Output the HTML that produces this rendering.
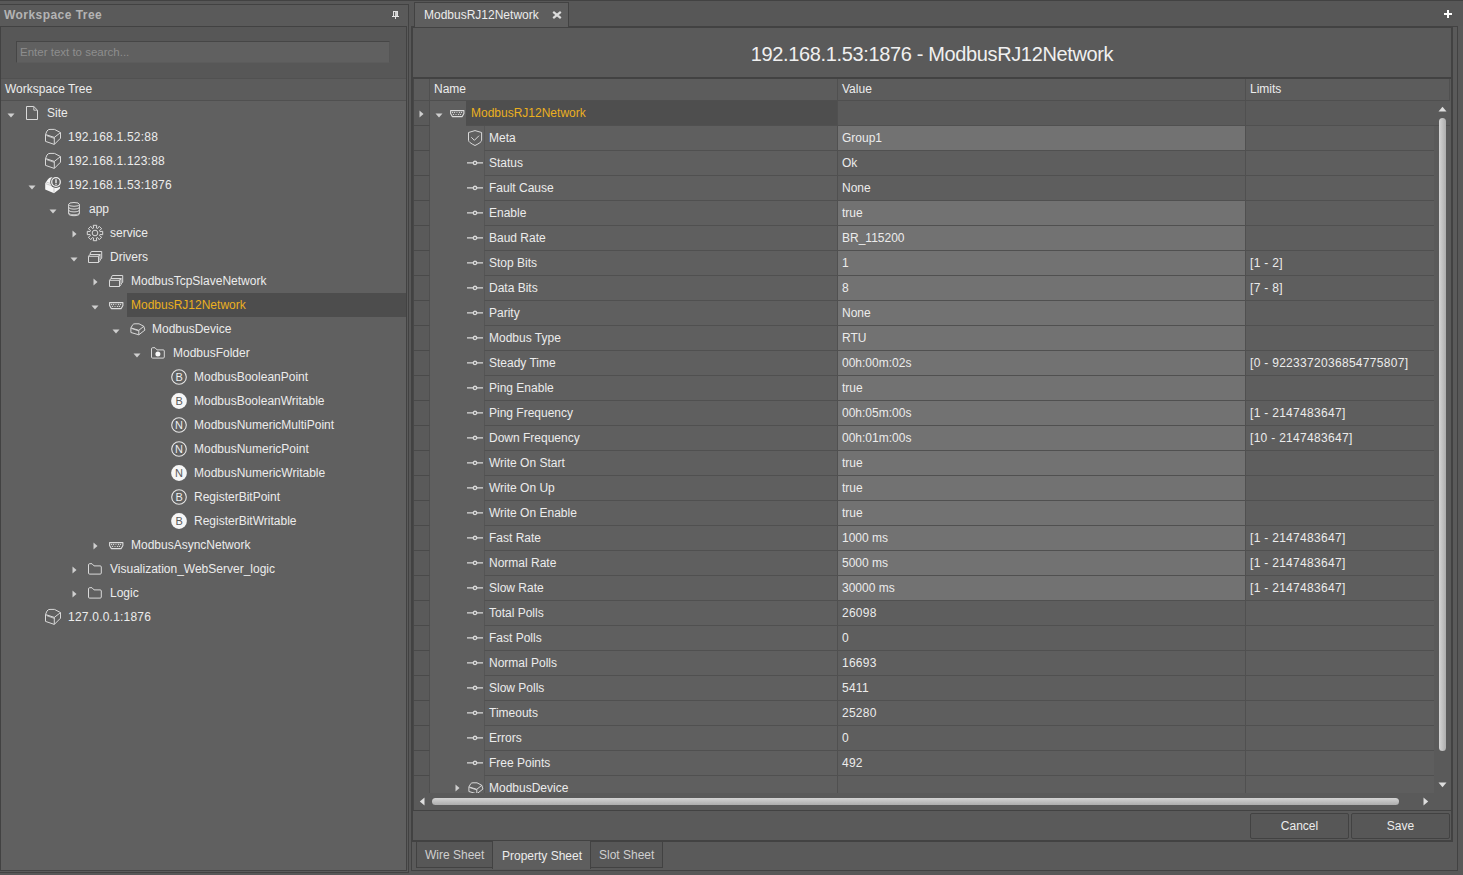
<!DOCTYPE html>
<html><head><meta charset="utf-8"><style>
html,body{margin:0;padding:0}
body{width:1463px;height:875px;overflow:hidden;background:#585858;position:relative;font-family:"Liberation Sans",sans-serif;font-size:12px;color:#ececec}
.a{position:absolute;box-sizing:content-box}
.t{position:absolute;white-space:nowrap;line-height:14px}
svg{overflow:visible}
</style></head><body>
<div class="a" style="left:0;top:0;width:1463px;height:1px;background:#424242"></div>
<div class="a" style="left:0;top:4px;width:408px;height:867px;border:1px solid #424242;border-left:none;background:#5a5a5a"></div>
<div class="t" style="left:4px;top:8px;font-weight:bold;color:#b4b4b4;letter-spacing:0.45px">Workspace Tree</div>
<svg class="a" style="left:391px;top:10px" width="10" height="10" viewBox="0 0 10 10" shape-rendering="crispEdges"><rect x="2" y="1" width="5" height="6" fill="#e2e2e2"/><rect x="3" y="2" width="1" height="4" fill="#606060"/><rect x="4" y="2" width="2" height="4" fill="#cfcfcf"/><rect x="1" y="6" width="7" height="1" fill="#e8e8e8"/><rect x="4" y="7" width="1" height="2" fill="#e0e0e0"/></svg>
<div class="a" style="left:0;top:26px;width:405px;height:843px;border:1px solid #424242;background:#606060"></div>
<div class="a" style="left:1px;top:27px;width:405px;height:51px;background:#575757"></div>
<div class="a" style="left:16px;top:41px;width:372px;height:20px;border:1px solid #464646;border-bottom-color:#5c5c5c;border-right-color:#555555;background:#606060"></div>
<div class="t" style="left:20px;top:45px;font-size:11.5px;color:#8e8e8e">Enter text to search...</div>
<div class="a" style="left:1px;top:78px;width:405px;height:1px;background:#515151"></div>
<div class="a" style="left:1px;top:79px;width:405px;height:21px;background:#5c5c5c;border-bottom:1px solid #505050"></div>
<div class="t" style="left:5px;top:82px;color:#ececec">Workspace Tree</div>
<svg class="a" style="left:7px;top:113px" width="8" height="5" viewBox="0 0 8 5"><path d="M0.5 0.5H7.5L4 4.5Z" fill="#cfcfcf"/></svg>
<svg class="a" style="left:26px;top:106px" width="13" height="15" viewBox="0 0 13 15" fill="none" stroke="#d9d9d9" stroke-width="1"><path d="M0.5 0.5H7.8L11.5 4.2V13.5H0.5Z"/><path d="M7.8 0.8V4.2H11.2" stroke-width="0.9"/></svg>
<div class="t" style="left:47px;top:106px;color:#ececec">Site</div>
<svg class="a" style="left:45px;top:129px" width="17" height="17" viewBox="0 0 17 17" fill="none" stroke="#d9d9d9" stroke-width="1"><path d="M0.5 5.5L9.3 8.4V15.4L0.5 12.4Z"/><path d="M9.3 8.4L15.5 3.6V9.2L9.3 15.4"/><path d="M0.5 5.5L2 2Q3 0.3 5 0.4H9.5L15.5 3.6"/><path d="M1.6 6.6L9.3 9.4" stroke-width="0.8"/></svg>
<div class="t" style="left:68px;top:130px;color:#ececec;letter-spacing:0.22px">192.168.1.52:88</div>
<svg class="a" style="left:45px;top:153px" width="17" height="17" viewBox="0 0 17 17" fill="none" stroke="#d9d9d9" stroke-width="1"><path d="M0.5 5.5L9.3 8.4V15.4L0.5 12.4Z"/><path d="M9.3 8.4L15.5 3.6V9.2L9.3 15.4"/><path d="M0.5 5.5L2 2Q3 0.3 5 0.4H9.5L15.5 3.6"/><path d="M1.6 6.6L9.3 9.4" stroke-width="0.8"/></svg>
<div class="t" style="left:68px;top:154px;color:#ececec;letter-spacing:0.22px">192.168.1.123:88</div>
<svg class="a" style="left:28px;top:185px" width="8" height="5" viewBox="0 0 8 5"><path d="M0.5 0.5H7.5L4 4.5Z" fill="#cfcfcf"/></svg>
<svg class="a" style="left:45px;top:177px" width="17" height="17" viewBox="0 0 17 17"><path d="M0.2 6.2L2.8 2.6Q4 0.4 6.2 0.3H9L15.2 8.5L14.8 11.8L9 16.2L0.2 12.6Z" fill="#f6f6f6"/><path d="M0.6 6.6L9 9.6V15.8M1.5 5.2L5.5 6.4" stroke="#b8b8b8" stroke-width="0.7" fill="none"/><circle cx="11" cy="5" r="5.9" fill="#606060"/><circle cx="11" cy="5" r="4.3" fill="none" stroke="#ececec" stroke-width="1.3"/><path d="M11 2.3V6.2" stroke="#e6e6e6" stroke-width="1.5"/><path d="M11 6.9V7.9" stroke="#e6e6e6" stroke-width="1.3"/></svg>
<div class="t" style="left:68px;top:178px;color:#ececec;letter-spacing:0.22px">192.168.1.53:1876</div>
<svg class="a" style="left:49px;top:209px" width="8" height="5" viewBox="0 0 8 5"><path d="M0.5 0.5H7.5L4 4.5Z" fill="#cfcfcf"/></svg>
<svg class="a" style="left:68px;top:202px" width="13" height="15" viewBox="0 0 13 15" fill="none" stroke="#d9d9d9" stroke-width="1"><ellipse cx="6" cy="2.4" rx="5.4" ry="1.9"/><path d="M0.6 2.4V11.8C0.6 12.9 3 13.7 6 13.7S11.4 12.9 11.4 11.8V2.4"/><path d="M0.6 5.2C0.6 6.3 3 7.1 6 7.1S11.4 6.3 11.4 5.2"/><path d="M0.6 8C0.6 9.1 3 9.9 6 9.9S11.4 9.1 11.4 8"/><path d="M0.6 10.8C0.6 11.9 3 12.7 6 12.7S11.4 11.9 11.4 10.8" stroke-width="0.8"/></svg>
<div class="t" style="left:89px;top:202px;color:#ececec">app</div>
<svg class="a" style="left:72px;top:229.5px" width="5" height="8" viewBox="0 0 5 8"><path d="M0.5 0.5V7.5L4.5 4Z" fill="#cfcfcf"/></svg>
<svg class="a" style="left:87px;top:225px" width="17" height="17" viewBox="0 0 17 17" fill="none" stroke="#d9d9d9" stroke-width="1"><path d="M6.65 3.00 L6.25 0.30 L9.75 0.30 L9.35 3.00 L10.58 3.51 L12.21 1.32 L14.68 3.79 L12.49 5.42 L13.00 6.65 L15.70 6.25 L15.70 9.75 L13.00 9.35 L12.49 10.58 L14.68 12.21 L12.21 14.68 L10.58 12.49 L9.35 13.00 L9.75 15.70 L6.25 15.70 L6.65 13.00 L5.42 12.49 L3.79 14.68 L1.32 12.21 L3.51 10.58 L3.00 9.35 L0.30 9.75 L0.30 6.25 L3.00 6.65 L3.51 5.42 L1.32 3.79 L3.79 1.32 L5.42 3.51Z" stroke-linejoin="miter"/><circle cx="8" cy="8" r="2.8"/></svg>
<div class="t" style="left:110px;top:226px;color:#ececec">service</div>
<svg class="a" style="left:70px;top:257px" width="8" height="5" viewBox="0 0 8 5"><path d="M0.5 0.5H7.5L4 4.5Z" fill="#cfcfcf"/></svg>
<svg class="a" style="left:88px;top:251px" width="15" height="13" viewBox="0 0 15 13" fill="none" stroke="#d9d9d9" stroke-width="1"><path d="M3.3 0.5H13.7V7.3L12.2 8.8"/><path d="M3.3 0.5L1.8 3.5"/><path d="M0.5 5.3L2 3.5H12L10.5 5.3"/><path d="M0.5 5.3H10.5V11.5H0.5Z"/><path d="M10.5 5.3L12 3.5V9.6L10.5 11.5"/></svg>
<div class="t" style="left:110px;top:250px;color:#ececec">Drivers</div>
<svg class="a" style="left:93px;top:277.5px" width="5" height="8" viewBox="0 0 5 8"><path d="M0.5 0.5V7.5L4.5 4Z" fill="#cfcfcf"/></svg>
<svg class="a" style="left:109px;top:275px" width="15" height="13" viewBox="0 0 15 13" fill="none" stroke="#d9d9d9" stroke-width="1"><path d="M3.3 0.5H13.7V7.3L12.2 8.8"/><path d="M3.3 0.5L1.8 3.5"/><path d="M0.5 5.3L2 3.5H12L10.5 5.3"/><path d="M0.5 5.3H10.5V11.5H0.5Z"/><path d="M10.5 5.3L12 3.5V9.6L10.5 11.5"/></svg>
<div class="t" style="left:131px;top:274px;color:#ececec">ModbusTcpSlaveNetwork</div>
<div class="a" style="left:127px;top:293px;width:279px;height:24px;background:#4d4d4d"></div>
<svg class="a" style="left:91px;top:305px" width="8" height="5" viewBox="0 0 8 5"><path d="M0.5 0.5H7.5L4 4.5Z" fill="#cfcfcf"/></svg>
<svg class="a" style="left:109px;top:302px" width="15" height="8" viewBox="0 0 15 8"><path d="M0.6 0.6H13.9V3.4L12.2 6.6H2.3L0.6 3.4Z" fill="none" stroke="#dcdcdc" stroke-width="1.1" stroke-linejoin="round"/><g fill="#d0d0d0"><circle cx="2.5" cy="2.5" r="0.7"/><circle cx="4.5" cy="2.5" r="0.7"/><circle cx="9.5" cy="2.5" r="0.7"/><circle cx="11.5" cy="2.5" r="0.7"/><circle cx="3.5" cy="4.4" r="0.7"/><circle cx="8.5" cy="4.4" r="0.7"/><circle cx="10.5" cy="4.4" r="0.7"/><rect x="5.8" y="2.1" width="2" height="0.8" fill="#a8a8a8"/><rect x="5" y="4" width="2" height="0.8" fill="#a8a8a8"/></g></svg>
<div class="t" style="left:131px;top:298px;color:#ebb020">ModbusRJ12Network</div>
<svg class="a" style="left:112px;top:329px" width="8" height="5" viewBox="0 0 8 5"><path d="M0.5 0.5H7.5L4 4.5Z" fill="#cfcfcf"/></svg>
<svg class="a" style="left:129.5px;top:322.5px" width="16" height="14" viewBox="0 0 16 14" fill="none" stroke="#d9d9d9" stroke-width="1"><path d="M0.9 4.9L8.8 7.3V11.8L0.9 9.5Z"/><path d="M8.8 7.3L13.8 3.3L14.9 7.1L8.8 11.8"/><path d="M0.9 4.9L2.8 1.6Q3.5 0.8 5 0.8H9L13.8 3.3"/><path d="M1.8 5.6L8.6 7.9" stroke-width="0.8"/></svg>
<div class="t" style="left:152px;top:322px;color:#ececec">ModbusDevice</div>
<svg class="a" style="left:133px;top:353px" width="8" height="5" viewBox="0 0 8 5"><path d="M0.5 0.5H7.5L4 4.5Z" fill="#cfcfcf"/></svg>
<svg class="a" style="left:151px;top:347px" width="15" height="13" viewBox="0 0 15 13" fill="none" stroke="#d9d9d9" stroke-width="1"><path d="M0.5 10V1.9Q0.5 0.7 1.7 0.7H4L6 2.9H12.2Q13.3 2.9 13.3 4V10Q13.3 11.1 12.2 11.1H1.6Q0.5 11.1 0.5 10Z"/><circle cx="6.9" cy="7.1" r="2.5" fill="#f8f8f8" stroke="none"/></svg>
<div class="t" style="left:173px;top:346px;color:#ececec">ModbusFolder</div>
<svg class="a" style="left:171px;top:369px" width="17" height="17" viewBox="0 0 17 17"><circle cx="8" cy="8" r="7.3" fill="none" stroke="#e6e6e6" stroke-width="1.1"/><text x="8.1" y="12" text-anchor="middle" font-family="Liberation Sans" font-size="11" fill="#ededed">B</text></svg>
<div class="t" style="left:194px;top:370px;color:#ececec">ModbusBooleanPoint</div>
<svg class="a" style="left:171px;top:393px" width="17" height="17" viewBox="0 0 17 17"><circle cx="8" cy="8" r="7.9" fill="#f6f6f6"/><text x="8.1" y="12" text-anchor="middle" font-family="Liberation Sans" font-size="11" fill="#5a5a5a">B</text></svg>
<div class="t" style="left:194px;top:394px;color:#ececec">ModbusBooleanWritable</div>
<svg class="a" style="left:171px;top:417px" width="17" height="17" viewBox="0 0 17 17"><circle cx="8" cy="8" r="7.3" fill="none" stroke="#e6e6e6" stroke-width="1.1"/><text x="8.1" y="12" text-anchor="middle" font-family="Liberation Sans" font-size="11" fill="#ededed">N</text></svg>
<div class="t" style="left:194px;top:418px;color:#ececec">ModbusNumericMultiPoint</div>
<svg class="a" style="left:171px;top:441px" width="17" height="17" viewBox="0 0 17 17"><circle cx="8" cy="8" r="7.3" fill="none" stroke="#e6e6e6" stroke-width="1.1"/><text x="8.1" y="12" text-anchor="middle" font-family="Liberation Sans" font-size="11" fill="#ededed">N</text></svg>
<div class="t" style="left:194px;top:442px;color:#ececec">ModbusNumericPoint</div>
<svg class="a" style="left:171px;top:465px" width="17" height="17" viewBox="0 0 17 17"><circle cx="8" cy="8" r="7.9" fill="#f6f6f6"/><text x="8.1" y="12" text-anchor="middle" font-family="Liberation Sans" font-size="11" fill="#5a5a5a">N</text></svg>
<div class="t" style="left:194px;top:466px;color:#ececec">ModbusNumericWritable</div>
<svg class="a" style="left:171px;top:489px" width="17" height="17" viewBox="0 0 17 17"><circle cx="8" cy="8" r="7.3" fill="none" stroke="#e6e6e6" stroke-width="1.1"/><text x="8.1" y="12" text-anchor="middle" font-family="Liberation Sans" font-size="11" fill="#ededed">B</text></svg>
<div class="t" style="left:194px;top:490px;color:#ececec">RegisterBitPoint</div>
<svg class="a" style="left:171px;top:513px" width="17" height="17" viewBox="0 0 17 17"><circle cx="8" cy="8" r="7.9" fill="#f6f6f6"/><text x="8.1" y="12" text-anchor="middle" font-family="Liberation Sans" font-size="11" fill="#5a5a5a">B</text></svg>
<div class="t" style="left:194px;top:514px;color:#ececec">RegisterBitWritable</div>
<svg class="a" style="left:93px;top:541.5px" width="5" height="8" viewBox="0 0 5 8"><path d="M0.5 0.5V7.5L4.5 4Z" fill="#cfcfcf"/></svg>
<svg class="a" style="left:109px;top:542px" width="15" height="8" viewBox="0 0 15 8"><path d="M0.6 0.6H13.9V3.4L12.2 6.6H2.3L0.6 3.4Z" fill="none" stroke="#dcdcdc" stroke-width="1.1" stroke-linejoin="round"/><g fill="#d0d0d0"><circle cx="2.5" cy="2.5" r="0.7"/><circle cx="4.5" cy="2.5" r="0.7"/><circle cx="9.5" cy="2.5" r="0.7"/><circle cx="11.5" cy="2.5" r="0.7"/><circle cx="3.5" cy="4.4" r="0.7"/><circle cx="8.5" cy="4.4" r="0.7"/><circle cx="10.5" cy="4.4" r="0.7"/><rect x="5.8" y="2.1" width="2" height="0.8" fill="#a8a8a8"/><rect x="5" y="4" width="2" height="0.8" fill="#a8a8a8"/></g></svg>
<div class="t" style="left:131px;top:538px;color:#ececec">ModbusAsyncNetwork</div>
<svg class="a" style="left:72px;top:565.5px" width="5" height="8" viewBox="0 0 5 8"><path d="M0.5 0.5V7.5L4.5 4Z" fill="#cfcfcf"/></svg>
<svg class="a" style="left:88px;top:563px" width="15" height="13" viewBox="0 0 15 13" fill="none" stroke="#d9d9d9" stroke-width="1"><path d="M0.5 10V1.9Q0.5 0.7 1.7 0.7H4L6 2.9H12.2Q13.3 2.9 13.3 4V10Q13.3 11.1 12.2 11.1H1.6Q0.5 11.1 0.5 10Z"/></svg>
<div class="t" style="left:110px;top:562px;color:#ececec">Visualization_WebServer_logic</div>
<svg class="a" style="left:72px;top:589.5px" width="5" height="8" viewBox="0 0 5 8"><path d="M0.5 0.5V7.5L4.5 4Z" fill="#cfcfcf"/></svg>
<svg class="a" style="left:88px;top:587px" width="15" height="13" viewBox="0 0 15 13" fill="none" stroke="#d9d9d9" stroke-width="1"><path d="M0.5 10V1.9Q0.5 0.7 1.7 0.7H4L6 2.9H12.2Q13.3 2.9 13.3 4V10Q13.3 11.1 12.2 11.1H1.6Q0.5 11.1 0.5 10Z"/></svg>
<div class="t" style="left:110px;top:586px;color:#ececec">Logic</div>
<svg class="a" style="left:45px;top:609px" width="17" height="17" viewBox="0 0 17 17" fill="none" stroke="#d9d9d9" stroke-width="1"><path d="M0.5 5.5L9.3 8.4V15.4L0.5 12.4Z"/><path d="M9.3 8.4L15.5 3.6V9.2L9.3 15.4"/><path d="M0.5 5.5L2 2Q3 0.3 5 0.4H9.5L15.5 3.6"/><path d="M1.6 6.6L9.3 9.4" stroke-width="0.8"/></svg>
<div class="t" style="left:68px;top:610px;color:#ececec;letter-spacing:0.22px">127.0.0.1:1876</div>
<div class="a" style="left:409px;top:1px;width:1054px;height:25px;background:#575757"></div>
<svg class="a" style="left:1444px;top:10px" width="8" height="8" viewBox="0 0 8 8"><path d="M0 4H8M4 0V8" stroke="#ffffff" stroke-width="2"/></svg>
<div class="a" style="left:411px;top:26px;width:1045px;height:843px;border:1px solid #424242;background:#5a5a5a"></div>
<div class="a" style="left:412px;top:27px;width:1038px;height:812px;border:1px solid #424242;border-right-width:2px;border-bottom-width:2px;background:#5a5a5a"></div>
<div class="a" style="left:414px;top:2px;width:153px;height:24px;border:1px solid #424242;border-bottom:none;background:#5e5e5e"></div>
<div class="t" style="left:424px;top:8px;color:#ececec">ModbusRJ12Network</div>
<svg class="a" style="left:552px;top:11px" width="10" height="8" viewBox="0 0 10 8"><path d="M1.2 0.8L8.8 7.2M8.8 0.8L1.2 7.2" stroke="#dcdcdc" stroke-width="2.2"/></svg>
<div class="t" style="left:413px;top:43px;width:1038px;text-align:center;font-size:20px;line-height:23px;color:#f0f0f0;letter-spacing:-0.36px">192.168.1.53:1876 - ModbusRJ12Network</div>
<div class="a" style="left:413px;top:77px;width:1038px;height:2px;background:#424242"></div>
<div class="a" style="left:413px;top:79px;width:1px;height:731px;background:#474747"></div>
<div class="a" style="left:414px;top:79px;width:1036px;height:21px;background:#5c5c5c"></div>
<div class="a" style="left:414px;top:100px;width:1036px;height:1px;background:#4f4f4f"></div>
<div class="a" style="left:429px;top:79px;width:1px;height:21px;background:#505050"></div>
<div class="a" style="left:837px;top:79px;width:1px;height:21px;background:#505050"></div>
<div class="a" style="left:1245px;top:79px;width:1px;height:21px;background:#505050"></div>
<div class="a" style="left:1449px;top:79px;width:1px;height:21px;background:#505050"></div>
<div class="t" style="left:434px;top:82px;color:#ececec">Name</div>
<div class="t" style="left:842px;top:82px;color:#ececec">Value</div>
<div class="t" style="left:1250px;top:82px;color:#ececec">Limits</div>
<div class="a" style="left:414px;top:101px;width:1036px;height:692px;overflow:hidden">
<div class="a" style="left:0;top:0px;width:15px;height:24px;background:#5a5a5a;border-bottom:1px solid #4a4a4a;border-right:1px solid #4f4f4f"></div>
<div class="a" style="left:16px;top:0px;width:54px;height:25px;background:#5f5f5f"></div>
<div class="a" style="left:16px;top:0px;width:36px;height:24px;background:#5f5f5f"></div>
<div class="a" style="left:52px;top:0px;width:371px;height:24px;background:#4e4e4e;border-bottom:1px solid #505050"></div>
<div class="a" style="left:423px;top:0px;width:408px;height:24px;background:#5a5a5a;border-bottom:1px solid #505050;border-left:1px solid #505050"></div>
<div class="a" style="left:831px;top:0px;width:205px;height:24px;background:#5a5a5a;border-bottom:1px solid #505050;border-left:1px solid #505050"></div>
<svg class="a" style="left:5px;top:8.5px" width="5" height="8" viewBox="0 0 5 8"><path d="M0.5 0.5V7.5L4.5 4Z" fill="#cfcfcf"/></svg>
<svg class="a" style="left:20.5px;top:12px" width="8" height="5" viewBox="0 0 8 5"><path d="M0.5 0.5H7.5L4 4.5Z" fill="#cfcfcf"/></svg>
<svg class="a" style="left:35.5px;top:8.5px" width="15" height="8" viewBox="0 0 15 8"><path d="M0.6 0.6H13.9V3.4L12.2 6.6H2.3L0.6 3.4Z" fill="none" stroke="#dcdcdc" stroke-width="1.1" stroke-linejoin="round"/><g fill="#d0d0d0"><circle cx="2.5" cy="2.5" r="0.7"/><circle cx="4.5" cy="2.5" r="0.7"/><circle cx="9.5" cy="2.5" r="0.7"/><circle cx="11.5" cy="2.5" r="0.7"/><circle cx="3.5" cy="4.4" r="0.7"/><circle cx="8.5" cy="4.4" r="0.7"/><circle cx="10.5" cy="4.4" r="0.7"/><rect x="5.8" y="2.1" width="2" height="0.8" fill="#a8a8a8"/><rect x="5" y="4" width="2" height="0.8" fill="#a8a8a8"/></g></svg>
<div class="t" style="left:57px;top:5px;color:#ebb020">ModbusRJ12Network</div>
<div class="a" style="left:0;top:25px;width:15px;height:24px;background:#5a5a5a;border-bottom:1px solid #4a4a4a;border-right:1px solid #4f4f4f"></div>
<div class="a" style="left:16px;top:25px;width:54px;height:25px;background:#5f5f5f"></div>
<div class="a" style="left:70px;top:25px;width:353px;height:24px;background:#5f5f5f;border-left:1px solid #555555;border-bottom:1px solid #505050"></div>
<div class="a" style="left:423px;top:25px;width:408px;height:24px;background:#727272;border-left:1px solid #505050;border-bottom:1px solid #505050"></div>
<div class="a" style="left:831px;top:25px;width:188px;height:24px;background:#5e5e5e;border-left:1px solid #505050;border-bottom:1px solid #505050"></div>
<svg class="a" style="left:54px;top:29px" width="15" height="16" viewBox="0 0 15 16" fill="none" stroke="#d9d9d9" stroke-width="1"><path d="M7 0.6L13.6 2.5V10.3Q13.6 12.4 7 15.5Q0.5 12.4 0.5 10.3V2.5Z"/><path d="M3.3 7.3L6.4 10.3L11 5.7"/></svg>
<div class="t" style="left:75px;top:30px;color:#ececec">Meta</div>
<div class="t" style="left:428px;top:30px;color:#ececec">Group1</div>
<div class="a" style="left:0;top:50px;width:15px;height:24px;background:#5a5a5a;border-bottom:1px solid #4a4a4a;border-right:1px solid #4f4f4f"></div>
<div class="a" style="left:16px;top:50px;width:54px;height:25px;background:#5f5f5f"></div>
<div class="a" style="left:70px;top:50px;width:353px;height:24px;background:#5f5f5f;border-left:1px solid #555555;border-bottom:1px solid #505050"></div>
<div class="a" style="left:423px;top:50px;width:408px;height:24px;background:#5e5e5e;border-left:1px solid #505050;border-bottom:1px solid #505050"></div>
<div class="a" style="left:831px;top:50px;width:188px;height:24px;background:#5e5e5e;border-left:1px solid #505050;border-bottom:1px solid #505050"></div>
<svg class="a" style="left:53px;top:58px" width="16" height="8" viewBox="0 0 16 8" fill="none" stroke="#d9d9d9" stroke-width="1"><path d="M0 3.9H6.3M9.7 3.9H16" stroke-width="1.2"/><circle cx="8" cy="3.9" r="1.65" stroke-width="1.3"/></svg>
<div class="t" style="left:75px;top:55px;color:#ececec">Status</div>
<div class="t" style="left:428px;top:55px;color:#ececec">Ok</div>
<div class="a" style="left:0;top:75px;width:15px;height:24px;background:#5a5a5a;border-bottom:1px solid #4a4a4a;border-right:1px solid #4f4f4f"></div>
<div class="a" style="left:16px;top:75px;width:54px;height:25px;background:#5f5f5f"></div>
<div class="a" style="left:70px;top:75px;width:353px;height:24px;background:#5f5f5f;border-left:1px solid #555555;border-bottom:1px solid #505050"></div>
<div class="a" style="left:423px;top:75px;width:408px;height:24px;background:#5e5e5e;border-left:1px solid #505050;border-bottom:1px solid #505050"></div>
<div class="a" style="left:831px;top:75px;width:188px;height:24px;background:#5e5e5e;border-left:1px solid #505050;border-bottom:1px solid #505050"></div>
<svg class="a" style="left:53px;top:83px" width="16" height="8" viewBox="0 0 16 8" fill="none" stroke="#d9d9d9" stroke-width="1"><path d="M0 3.9H6.3M9.7 3.9H16" stroke-width="1.2"/><circle cx="8" cy="3.9" r="1.65" stroke-width="1.3"/></svg>
<div class="t" style="left:75px;top:80px;color:#ececec">Fault Cause</div>
<div class="t" style="left:428px;top:80px;color:#ececec">None</div>
<div class="a" style="left:0;top:100px;width:15px;height:24px;background:#5a5a5a;border-bottom:1px solid #4a4a4a;border-right:1px solid #4f4f4f"></div>
<div class="a" style="left:16px;top:100px;width:54px;height:25px;background:#5f5f5f"></div>
<div class="a" style="left:70px;top:100px;width:353px;height:24px;background:#5f5f5f;border-left:1px solid #555555;border-bottom:1px solid #505050"></div>
<div class="a" style="left:423px;top:100px;width:408px;height:24px;background:#727272;border-left:1px solid #505050;border-bottom:1px solid #505050"></div>
<div class="a" style="left:831px;top:100px;width:188px;height:24px;background:#5e5e5e;border-left:1px solid #505050;border-bottom:1px solid #505050"></div>
<svg class="a" style="left:53px;top:108px" width="16" height="8" viewBox="0 0 16 8" fill="none" stroke="#d9d9d9" stroke-width="1"><path d="M0 3.9H6.3M9.7 3.9H16" stroke-width="1.2"/><circle cx="8" cy="3.9" r="1.65" stroke-width="1.3"/></svg>
<div class="t" style="left:75px;top:105px;color:#ececec">Enable</div>
<div class="t" style="left:428px;top:105px;color:#ececec">true</div>
<div class="a" style="left:0;top:125px;width:15px;height:24px;background:#5a5a5a;border-bottom:1px solid #4a4a4a;border-right:1px solid #4f4f4f"></div>
<div class="a" style="left:16px;top:125px;width:54px;height:25px;background:#5f5f5f"></div>
<div class="a" style="left:70px;top:125px;width:353px;height:24px;background:#5f5f5f;border-left:1px solid #555555;border-bottom:1px solid #505050"></div>
<div class="a" style="left:423px;top:125px;width:408px;height:24px;background:#727272;border-left:1px solid #505050;border-bottom:1px solid #505050"></div>
<div class="a" style="left:831px;top:125px;width:188px;height:24px;background:#5e5e5e;border-left:1px solid #505050;border-bottom:1px solid #505050"></div>
<svg class="a" style="left:53px;top:133px" width="16" height="8" viewBox="0 0 16 8" fill="none" stroke="#d9d9d9" stroke-width="1"><path d="M0 3.9H6.3M9.7 3.9H16" stroke-width="1.2"/><circle cx="8" cy="3.9" r="1.65" stroke-width="1.3"/></svg>
<div class="t" style="left:75px;top:130px;color:#ececec">Baud Rate</div>
<div class="t" style="left:428px;top:130px;color:#ececec">BR_115200</div>
<div class="a" style="left:0;top:150px;width:15px;height:24px;background:#5a5a5a;border-bottom:1px solid #4a4a4a;border-right:1px solid #4f4f4f"></div>
<div class="a" style="left:16px;top:150px;width:54px;height:25px;background:#5f5f5f"></div>
<div class="a" style="left:70px;top:150px;width:353px;height:24px;background:#5f5f5f;border-left:1px solid #555555;border-bottom:1px solid #505050"></div>
<div class="a" style="left:423px;top:150px;width:408px;height:24px;background:#727272;border-left:1px solid #505050;border-bottom:1px solid #505050"></div>
<div class="a" style="left:831px;top:150px;width:188px;height:24px;background:#5e5e5e;border-left:1px solid #505050;border-bottom:1px solid #505050"></div>
<svg class="a" style="left:53px;top:158px" width="16" height="8" viewBox="0 0 16 8" fill="none" stroke="#d9d9d9" stroke-width="1"><path d="M0 3.9H6.3M9.7 3.9H16" stroke-width="1.2"/><circle cx="8" cy="3.9" r="1.65" stroke-width="1.3"/></svg>
<div class="t" style="left:75px;top:155px;color:#ececec">Stop Bits</div>
<div class="t" style="left:428px;top:155px;color:#ececec;letter-spacing:0.25px">1</div>
<div class="t" style="left:836px;top:155px;color:#ececec;letter-spacing:0.3px">[1 - 2]</div>
<div class="a" style="left:0;top:175px;width:15px;height:24px;background:#5a5a5a;border-bottom:1px solid #4a4a4a;border-right:1px solid #4f4f4f"></div>
<div class="a" style="left:16px;top:175px;width:54px;height:25px;background:#5f5f5f"></div>
<div class="a" style="left:70px;top:175px;width:353px;height:24px;background:#5f5f5f;border-left:1px solid #555555;border-bottom:1px solid #505050"></div>
<div class="a" style="left:423px;top:175px;width:408px;height:24px;background:#727272;border-left:1px solid #505050;border-bottom:1px solid #505050"></div>
<div class="a" style="left:831px;top:175px;width:188px;height:24px;background:#5e5e5e;border-left:1px solid #505050;border-bottom:1px solid #505050"></div>
<svg class="a" style="left:53px;top:183px" width="16" height="8" viewBox="0 0 16 8" fill="none" stroke="#d9d9d9" stroke-width="1"><path d="M0 3.9H6.3M9.7 3.9H16" stroke-width="1.2"/><circle cx="8" cy="3.9" r="1.65" stroke-width="1.3"/></svg>
<div class="t" style="left:75px;top:180px;color:#ececec">Data Bits</div>
<div class="t" style="left:428px;top:180px;color:#ececec;letter-spacing:0.25px">8</div>
<div class="t" style="left:836px;top:180px;color:#ececec;letter-spacing:0.3px">[7 - 8]</div>
<div class="a" style="left:0;top:200px;width:15px;height:24px;background:#5a5a5a;border-bottom:1px solid #4a4a4a;border-right:1px solid #4f4f4f"></div>
<div class="a" style="left:16px;top:200px;width:54px;height:25px;background:#5f5f5f"></div>
<div class="a" style="left:70px;top:200px;width:353px;height:24px;background:#5f5f5f;border-left:1px solid #555555;border-bottom:1px solid #505050"></div>
<div class="a" style="left:423px;top:200px;width:408px;height:24px;background:#727272;border-left:1px solid #505050;border-bottom:1px solid #505050"></div>
<div class="a" style="left:831px;top:200px;width:188px;height:24px;background:#5e5e5e;border-left:1px solid #505050;border-bottom:1px solid #505050"></div>
<svg class="a" style="left:53px;top:208px" width="16" height="8" viewBox="0 0 16 8" fill="none" stroke="#d9d9d9" stroke-width="1"><path d="M0 3.9H6.3M9.7 3.9H16" stroke-width="1.2"/><circle cx="8" cy="3.9" r="1.65" stroke-width="1.3"/></svg>
<div class="t" style="left:75px;top:205px;color:#ececec">Parity</div>
<div class="t" style="left:428px;top:205px;color:#ececec">None</div>
<div class="a" style="left:0;top:225px;width:15px;height:24px;background:#5a5a5a;border-bottom:1px solid #4a4a4a;border-right:1px solid #4f4f4f"></div>
<div class="a" style="left:16px;top:225px;width:54px;height:25px;background:#5f5f5f"></div>
<div class="a" style="left:70px;top:225px;width:353px;height:24px;background:#5f5f5f;border-left:1px solid #555555;border-bottom:1px solid #505050"></div>
<div class="a" style="left:423px;top:225px;width:408px;height:24px;background:#727272;border-left:1px solid #505050;border-bottom:1px solid #505050"></div>
<div class="a" style="left:831px;top:225px;width:188px;height:24px;background:#5e5e5e;border-left:1px solid #505050;border-bottom:1px solid #505050"></div>
<svg class="a" style="left:53px;top:233px" width="16" height="8" viewBox="0 0 16 8" fill="none" stroke="#d9d9d9" stroke-width="1"><path d="M0 3.9H6.3M9.7 3.9H16" stroke-width="1.2"/><circle cx="8" cy="3.9" r="1.65" stroke-width="1.3"/></svg>
<div class="t" style="left:75px;top:230px;color:#ececec">Modbus Type</div>
<div class="t" style="left:428px;top:230px;color:#ececec">RTU</div>
<div class="a" style="left:0;top:250px;width:15px;height:24px;background:#5a5a5a;border-bottom:1px solid #4a4a4a;border-right:1px solid #4f4f4f"></div>
<div class="a" style="left:16px;top:250px;width:54px;height:25px;background:#5f5f5f"></div>
<div class="a" style="left:70px;top:250px;width:353px;height:24px;background:#5f5f5f;border-left:1px solid #555555;border-bottom:1px solid #505050"></div>
<div class="a" style="left:423px;top:250px;width:408px;height:24px;background:#727272;border-left:1px solid #505050;border-bottom:1px solid #505050"></div>
<div class="a" style="left:831px;top:250px;width:188px;height:24px;background:#5e5e5e;border-left:1px solid #505050;border-bottom:1px solid #505050"></div>
<svg class="a" style="left:53px;top:258px" width="16" height="8" viewBox="0 0 16 8" fill="none" stroke="#d9d9d9" stroke-width="1"><path d="M0 3.9H6.3M9.7 3.9H16" stroke-width="1.2"/><circle cx="8" cy="3.9" r="1.65" stroke-width="1.3"/></svg>
<div class="t" style="left:75px;top:255px;color:#ececec">Steady Time</div>
<div class="t" style="left:428px;top:255px;color:#ececec">00h:00m:02s</div>
<div class="t" style="left:836px;top:255px;color:#ececec;letter-spacing:0.3px">[0 - 9223372036854775807]</div>
<div class="a" style="left:0;top:275px;width:15px;height:24px;background:#5a5a5a;border-bottom:1px solid #4a4a4a;border-right:1px solid #4f4f4f"></div>
<div class="a" style="left:16px;top:275px;width:54px;height:25px;background:#5f5f5f"></div>
<div class="a" style="left:70px;top:275px;width:353px;height:24px;background:#5f5f5f;border-left:1px solid #555555;border-bottom:1px solid #505050"></div>
<div class="a" style="left:423px;top:275px;width:408px;height:24px;background:#727272;border-left:1px solid #505050;border-bottom:1px solid #505050"></div>
<div class="a" style="left:831px;top:275px;width:188px;height:24px;background:#5e5e5e;border-left:1px solid #505050;border-bottom:1px solid #505050"></div>
<svg class="a" style="left:53px;top:283px" width="16" height="8" viewBox="0 0 16 8" fill="none" stroke="#d9d9d9" stroke-width="1"><path d="M0 3.9H6.3M9.7 3.9H16" stroke-width="1.2"/><circle cx="8" cy="3.9" r="1.65" stroke-width="1.3"/></svg>
<div class="t" style="left:75px;top:280px;color:#ececec">Ping Enable</div>
<div class="t" style="left:428px;top:280px;color:#ececec">true</div>
<div class="a" style="left:0;top:300px;width:15px;height:24px;background:#5a5a5a;border-bottom:1px solid #4a4a4a;border-right:1px solid #4f4f4f"></div>
<div class="a" style="left:16px;top:300px;width:54px;height:25px;background:#5f5f5f"></div>
<div class="a" style="left:70px;top:300px;width:353px;height:24px;background:#5f5f5f;border-left:1px solid #555555;border-bottom:1px solid #505050"></div>
<div class="a" style="left:423px;top:300px;width:408px;height:24px;background:#727272;border-left:1px solid #505050;border-bottom:1px solid #505050"></div>
<div class="a" style="left:831px;top:300px;width:188px;height:24px;background:#5e5e5e;border-left:1px solid #505050;border-bottom:1px solid #505050"></div>
<svg class="a" style="left:53px;top:308px" width="16" height="8" viewBox="0 0 16 8" fill="none" stroke="#d9d9d9" stroke-width="1"><path d="M0 3.9H6.3M9.7 3.9H16" stroke-width="1.2"/><circle cx="8" cy="3.9" r="1.65" stroke-width="1.3"/></svg>
<div class="t" style="left:75px;top:305px;color:#ececec">Ping Frequency</div>
<div class="t" style="left:428px;top:305px;color:#ececec">00h:05m:00s</div>
<div class="t" style="left:836px;top:305px;color:#ececec;letter-spacing:0.3px">[1 - 2147483647]</div>
<div class="a" style="left:0;top:325px;width:15px;height:24px;background:#5a5a5a;border-bottom:1px solid #4a4a4a;border-right:1px solid #4f4f4f"></div>
<div class="a" style="left:16px;top:325px;width:54px;height:25px;background:#5f5f5f"></div>
<div class="a" style="left:70px;top:325px;width:353px;height:24px;background:#5f5f5f;border-left:1px solid #555555;border-bottom:1px solid #505050"></div>
<div class="a" style="left:423px;top:325px;width:408px;height:24px;background:#727272;border-left:1px solid #505050;border-bottom:1px solid #505050"></div>
<div class="a" style="left:831px;top:325px;width:188px;height:24px;background:#5e5e5e;border-left:1px solid #505050;border-bottom:1px solid #505050"></div>
<svg class="a" style="left:53px;top:333px" width="16" height="8" viewBox="0 0 16 8" fill="none" stroke="#d9d9d9" stroke-width="1"><path d="M0 3.9H6.3M9.7 3.9H16" stroke-width="1.2"/><circle cx="8" cy="3.9" r="1.65" stroke-width="1.3"/></svg>
<div class="t" style="left:75px;top:330px;color:#ececec">Down Frequency</div>
<div class="t" style="left:428px;top:330px;color:#ececec">00h:01m:00s</div>
<div class="t" style="left:836px;top:330px;color:#ececec;letter-spacing:0.3px">[10 - 2147483647]</div>
<div class="a" style="left:0;top:350px;width:15px;height:24px;background:#5a5a5a;border-bottom:1px solid #4a4a4a;border-right:1px solid #4f4f4f"></div>
<div class="a" style="left:16px;top:350px;width:54px;height:25px;background:#5f5f5f"></div>
<div class="a" style="left:70px;top:350px;width:353px;height:24px;background:#5f5f5f;border-left:1px solid #555555;border-bottom:1px solid #505050"></div>
<div class="a" style="left:423px;top:350px;width:408px;height:24px;background:#727272;border-left:1px solid #505050;border-bottom:1px solid #505050"></div>
<div class="a" style="left:831px;top:350px;width:188px;height:24px;background:#5e5e5e;border-left:1px solid #505050;border-bottom:1px solid #505050"></div>
<svg class="a" style="left:53px;top:358px" width="16" height="8" viewBox="0 0 16 8" fill="none" stroke="#d9d9d9" stroke-width="1"><path d="M0 3.9H6.3M9.7 3.9H16" stroke-width="1.2"/><circle cx="8" cy="3.9" r="1.65" stroke-width="1.3"/></svg>
<div class="t" style="left:75px;top:355px;color:#ececec">Write On Start</div>
<div class="t" style="left:428px;top:355px;color:#ececec">true</div>
<div class="a" style="left:0;top:375px;width:15px;height:24px;background:#5a5a5a;border-bottom:1px solid #4a4a4a;border-right:1px solid #4f4f4f"></div>
<div class="a" style="left:16px;top:375px;width:54px;height:25px;background:#5f5f5f"></div>
<div class="a" style="left:70px;top:375px;width:353px;height:24px;background:#5f5f5f;border-left:1px solid #555555;border-bottom:1px solid #505050"></div>
<div class="a" style="left:423px;top:375px;width:408px;height:24px;background:#727272;border-left:1px solid #505050;border-bottom:1px solid #505050"></div>
<div class="a" style="left:831px;top:375px;width:188px;height:24px;background:#5e5e5e;border-left:1px solid #505050;border-bottom:1px solid #505050"></div>
<svg class="a" style="left:53px;top:383px" width="16" height="8" viewBox="0 0 16 8" fill="none" stroke="#d9d9d9" stroke-width="1"><path d="M0 3.9H6.3M9.7 3.9H16" stroke-width="1.2"/><circle cx="8" cy="3.9" r="1.65" stroke-width="1.3"/></svg>
<div class="t" style="left:75px;top:380px;color:#ececec">Write On Up</div>
<div class="t" style="left:428px;top:380px;color:#ececec">true</div>
<div class="a" style="left:0;top:400px;width:15px;height:24px;background:#5a5a5a;border-bottom:1px solid #4a4a4a;border-right:1px solid #4f4f4f"></div>
<div class="a" style="left:16px;top:400px;width:54px;height:25px;background:#5f5f5f"></div>
<div class="a" style="left:70px;top:400px;width:353px;height:24px;background:#5f5f5f;border-left:1px solid #555555;border-bottom:1px solid #505050"></div>
<div class="a" style="left:423px;top:400px;width:408px;height:24px;background:#727272;border-left:1px solid #505050;border-bottom:1px solid #505050"></div>
<div class="a" style="left:831px;top:400px;width:188px;height:24px;background:#5e5e5e;border-left:1px solid #505050;border-bottom:1px solid #505050"></div>
<svg class="a" style="left:53px;top:408px" width="16" height="8" viewBox="0 0 16 8" fill="none" stroke="#d9d9d9" stroke-width="1"><path d="M0 3.9H6.3M9.7 3.9H16" stroke-width="1.2"/><circle cx="8" cy="3.9" r="1.65" stroke-width="1.3"/></svg>
<div class="t" style="left:75px;top:405px;color:#ececec">Write On Enable</div>
<div class="t" style="left:428px;top:405px;color:#ececec">true</div>
<div class="a" style="left:0;top:425px;width:15px;height:24px;background:#5a5a5a;border-bottom:1px solid #4a4a4a;border-right:1px solid #4f4f4f"></div>
<div class="a" style="left:16px;top:425px;width:54px;height:25px;background:#5f5f5f"></div>
<div class="a" style="left:70px;top:425px;width:353px;height:24px;background:#5f5f5f;border-left:1px solid #555555;border-bottom:1px solid #505050"></div>
<div class="a" style="left:423px;top:425px;width:408px;height:24px;background:#727272;border-left:1px solid #505050;border-bottom:1px solid #505050"></div>
<div class="a" style="left:831px;top:425px;width:188px;height:24px;background:#5e5e5e;border-left:1px solid #505050;border-bottom:1px solid #505050"></div>
<svg class="a" style="left:53px;top:433px" width="16" height="8" viewBox="0 0 16 8" fill="none" stroke="#d9d9d9" stroke-width="1"><path d="M0 3.9H6.3M9.7 3.9H16" stroke-width="1.2"/><circle cx="8" cy="3.9" r="1.65" stroke-width="1.3"/></svg>
<div class="t" style="left:75px;top:430px;color:#ececec">Fast Rate</div>
<div class="t" style="left:428px;top:430px;color:#ececec">1000 ms</div>
<div class="t" style="left:836px;top:430px;color:#ececec;letter-spacing:0.3px">[1 - 2147483647]</div>
<div class="a" style="left:0;top:450px;width:15px;height:24px;background:#5a5a5a;border-bottom:1px solid #4a4a4a;border-right:1px solid #4f4f4f"></div>
<div class="a" style="left:16px;top:450px;width:54px;height:25px;background:#5f5f5f"></div>
<div class="a" style="left:70px;top:450px;width:353px;height:24px;background:#5f5f5f;border-left:1px solid #555555;border-bottom:1px solid #505050"></div>
<div class="a" style="left:423px;top:450px;width:408px;height:24px;background:#727272;border-left:1px solid #505050;border-bottom:1px solid #505050"></div>
<div class="a" style="left:831px;top:450px;width:188px;height:24px;background:#5e5e5e;border-left:1px solid #505050;border-bottom:1px solid #505050"></div>
<svg class="a" style="left:53px;top:458px" width="16" height="8" viewBox="0 0 16 8" fill="none" stroke="#d9d9d9" stroke-width="1"><path d="M0 3.9H6.3M9.7 3.9H16" stroke-width="1.2"/><circle cx="8" cy="3.9" r="1.65" stroke-width="1.3"/></svg>
<div class="t" style="left:75px;top:455px;color:#ececec">Normal Rate</div>
<div class="t" style="left:428px;top:455px;color:#ececec">5000 ms</div>
<div class="t" style="left:836px;top:455px;color:#ececec;letter-spacing:0.3px">[1 - 2147483647]</div>
<div class="a" style="left:0;top:475px;width:15px;height:24px;background:#5a5a5a;border-bottom:1px solid #4a4a4a;border-right:1px solid #4f4f4f"></div>
<div class="a" style="left:16px;top:475px;width:54px;height:25px;background:#5f5f5f"></div>
<div class="a" style="left:70px;top:475px;width:353px;height:24px;background:#5f5f5f;border-left:1px solid #555555;border-bottom:1px solid #505050"></div>
<div class="a" style="left:423px;top:475px;width:408px;height:24px;background:#727272;border-left:1px solid #505050;border-bottom:1px solid #505050"></div>
<div class="a" style="left:831px;top:475px;width:188px;height:24px;background:#5e5e5e;border-left:1px solid #505050;border-bottom:1px solid #505050"></div>
<svg class="a" style="left:53px;top:483px" width="16" height="8" viewBox="0 0 16 8" fill="none" stroke="#d9d9d9" stroke-width="1"><path d="M0 3.9H6.3M9.7 3.9H16" stroke-width="1.2"/><circle cx="8" cy="3.9" r="1.65" stroke-width="1.3"/></svg>
<div class="t" style="left:75px;top:480px;color:#ececec">Slow Rate</div>
<div class="t" style="left:428px;top:480px;color:#ececec">30000 ms</div>
<div class="t" style="left:836px;top:480px;color:#ececec;letter-spacing:0.3px">[1 - 2147483647]</div>
<div class="a" style="left:0;top:500px;width:15px;height:24px;background:#5a5a5a;border-bottom:1px solid #4a4a4a;border-right:1px solid #4f4f4f"></div>
<div class="a" style="left:16px;top:500px;width:54px;height:25px;background:#5f5f5f"></div>
<div class="a" style="left:70px;top:500px;width:353px;height:24px;background:#5f5f5f;border-left:1px solid #555555;border-bottom:1px solid #505050"></div>
<div class="a" style="left:423px;top:500px;width:408px;height:24px;background:#5e5e5e;border-left:1px solid #505050;border-bottom:1px solid #505050"></div>
<div class="a" style="left:831px;top:500px;width:188px;height:24px;background:#5e5e5e;border-left:1px solid #505050;border-bottom:1px solid #505050"></div>
<svg class="a" style="left:53px;top:508px" width="16" height="8" viewBox="0 0 16 8" fill="none" stroke="#d9d9d9" stroke-width="1"><path d="M0 3.9H6.3M9.7 3.9H16" stroke-width="1.2"/><circle cx="8" cy="3.9" r="1.65" stroke-width="1.3"/></svg>
<div class="t" style="left:75px;top:505px;color:#ececec">Total Polls</div>
<div class="t" style="left:428px;top:505px;color:#ececec;letter-spacing:0.25px">26098</div>
<div class="a" style="left:0;top:525px;width:15px;height:24px;background:#5a5a5a;border-bottom:1px solid #4a4a4a;border-right:1px solid #4f4f4f"></div>
<div class="a" style="left:16px;top:525px;width:54px;height:25px;background:#5f5f5f"></div>
<div class="a" style="left:70px;top:525px;width:353px;height:24px;background:#5f5f5f;border-left:1px solid #555555;border-bottom:1px solid #505050"></div>
<div class="a" style="left:423px;top:525px;width:408px;height:24px;background:#5e5e5e;border-left:1px solid #505050;border-bottom:1px solid #505050"></div>
<div class="a" style="left:831px;top:525px;width:188px;height:24px;background:#5e5e5e;border-left:1px solid #505050;border-bottom:1px solid #505050"></div>
<svg class="a" style="left:53px;top:533px" width="16" height="8" viewBox="0 0 16 8" fill="none" stroke="#d9d9d9" stroke-width="1"><path d="M0 3.9H6.3M9.7 3.9H16" stroke-width="1.2"/><circle cx="8" cy="3.9" r="1.65" stroke-width="1.3"/></svg>
<div class="t" style="left:75px;top:530px;color:#ececec">Fast Polls</div>
<div class="t" style="left:428px;top:530px;color:#ececec;letter-spacing:0.25px">0</div>
<div class="a" style="left:0;top:550px;width:15px;height:24px;background:#5a5a5a;border-bottom:1px solid #4a4a4a;border-right:1px solid #4f4f4f"></div>
<div class="a" style="left:16px;top:550px;width:54px;height:25px;background:#5f5f5f"></div>
<div class="a" style="left:70px;top:550px;width:353px;height:24px;background:#5f5f5f;border-left:1px solid #555555;border-bottom:1px solid #505050"></div>
<div class="a" style="left:423px;top:550px;width:408px;height:24px;background:#5e5e5e;border-left:1px solid #505050;border-bottom:1px solid #505050"></div>
<div class="a" style="left:831px;top:550px;width:188px;height:24px;background:#5e5e5e;border-left:1px solid #505050;border-bottom:1px solid #505050"></div>
<svg class="a" style="left:53px;top:558px" width="16" height="8" viewBox="0 0 16 8" fill="none" stroke="#d9d9d9" stroke-width="1"><path d="M0 3.9H6.3M9.7 3.9H16" stroke-width="1.2"/><circle cx="8" cy="3.9" r="1.65" stroke-width="1.3"/></svg>
<div class="t" style="left:75px;top:555px;color:#ececec">Normal Polls</div>
<div class="t" style="left:428px;top:555px;color:#ececec;letter-spacing:0.25px">16693</div>
<div class="a" style="left:0;top:575px;width:15px;height:24px;background:#5a5a5a;border-bottom:1px solid #4a4a4a;border-right:1px solid #4f4f4f"></div>
<div class="a" style="left:16px;top:575px;width:54px;height:25px;background:#5f5f5f"></div>
<div class="a" style="left:70px;top:575px;width:353px;height:24px;background:#5f5f5f;border-left:1px solid #555555;border-bottom:1px solid #505050"></div>
<div class="a" style="left:423px;top:575px;width:408px;height:24px;background:#5e5e5e;border-left:1px solid #505050;border-bottom:1px solid #505050"></div>
<div class="a" style="left:831px;top:575px;width:188px;height:24px;background:#5e5e5e;border-left:1px solid #505050;border-bottom:1px solid #505050"></div>
<svg class="a" style="left:53px;top:583px" width="16" height="8" viewBox="0 0 16 8" fill="none" stroke="#d9d9d9" stroke-width="1"><path d="M0 3.9H6.3M9.7 3.9H16" stroke-width="1.2"/><circle cx="8" cy="3.9" r="1.65" stroke-width="1.3"/></svg>
<div class="t" style="left:75px;top:580px;color:#ececec">Slow Polls</div>
<div class="t" style="left:428px;top:580px;color:#ececec;letter-spacing:0.25px">5411</div>
<div class="a" style="left:0;top:600px;width:15px;height:24px;background:#5a5a5a;border-bottom:1px solid #4a4a4a;border-right:1px solid #4f4f4f"></div>
<div class="a" style="left:16px;top:600px;width:54px;height:25px;background:#5f5f5f"></div>
<div class="a" style="left:70px;top:600px;width:353px;height:24px;background:#5f5f5f;border-left:1px solid #555555;border-bottom:1px solid #505050"></div>
<div class="a" style="left:423px;top:600px;width:408px;height:24px;background:#5e5e5e;border-left:1px solid #505050;border-bottom:1px solid #505050"></div>
<div class="a" style="left:831px;top:600px;width:188px;height:24px;background:#5e5e5e;border-left:1px solid #505050;border-bottom:1px solid #505050"></div>
<svg class="a" style="left:53px;top:608px" width="16" height="8" viewBox="0 0 16 8" fill="none" stroke="#d9d9d9" stroke-width="1"><path d="M0 3.9H6.3M9.7 3.9H16" stroke-width="1.2"/><circle cx="8" cy="3.9" r="1.65" stroke-width="1.3"/></svg>
<div class="t" style="left:75px;top:605px;color:#ececec">Timeouts</div>
<div class="t" style="left:428px;top:605px;color:#ececec;letter-spacing:0.25px">25280</div>
<div class="a" style="left:0;top:625px;width:15px;height:24px;background:#5a5a5a;border-bottom:1px solid #4a4a4a;border-right:1px solid #4f4f4f"></div>
<div class="a" style="left:16px;top:625px;width:54px;height:25px;background:#5f5f5f"></div>
<div class="a" style="left:70px;top:625px;width:353px;height:24px;background:#5f5f5f;border-left:1px solid #555555;border-bottom:1px solid #505050"></div>
<div class="a" style="left:423px;top:625px;width:408px;height:24px;background:#5e5e5e;border-left:1px solid #505050;border-bottom:1px solid #505050"></div>
<div class="a" style="left:831px;top:625px;width:188px;height:24px;background:#5e5e5e;border-left:1px solid #505050;border-bottom:1px solid #505050"></div>
<svg class="a" style="left:53px;top:633px" width="16" height="8" viewBox="0 0 16 8" fill="none" stroke="#d9d9d9" stroke-width="1"><path d="M0 3.9H6.3M9.7 3.9H16" stroke-width="1.2"/><circle cx="8" cy="3.9" r="1.65" stroke-width="1.3"/></svg>
<div class="t" style="left:75px;top:630px;color:#ececec">Errors</div>
<div class="t" style="left:428px;top:630px;color:#ececec;letter-spacing:0.25px">0</div>
<div class="a" style="left:0;top:650px;width:15px;height:24px;background:#5a5a5a;border-bottom:1px solid #4a4a4a;border-right:1px solid #4f4f4f"></div>
<div class="a" style="left:16px;top:650px;width:54px;height:25px;background:#5f5f5f"></div>
<div class="a" style="left:70px;top:650px;width:353px;height:24px;background:#5f5f5f;border-left:1px solid #555555;border-bottom:1px solid #505050"></div>
<div class="a" style="left:423px;top:650px;width:408px;height:24px;background:#5e5e5e;border-left:1px solid #505050;border-bottom:1px solid #505050"></div>
<div class="a" style="left:831px;top:650px;width:188px;height:24px;background:#5e5e5e;border-left:1px solid #505050;border-bottom:1px solid #505050"></div>
<svg class="a" style="left:53px;top:658px" width="16" height="8" viewBox="0 0 16 8" fill="none" stroke="#d9d9d9" stroke-width="1"><path d="M0 3.9H6.3M9.7 3.9H16" stroke-width="1.2"/><circle cx="8" cy="3.9" r="1.65" stroke-width="1.3"/></svg>
<div class="t" style="left:75px;top:655px;color:#ececec">Free Points</div>
<div class="t" style="left:428px;top:655px;color:#ececec;letter-spacing:0.25px">492</div>
<div class="a" style="left:0;top:675px;width:15px;height:24px;background:#5a5a5a;border-bottom:1px solid #4a4a4a;border-right:1px solid #4f4f4f"></div>
<div class="a" style="left:16px;top:675px;width:54px;height:25px;background:#5f5f5f"></div>
<div class="a" style="left:70px;top:675px;width:353px;height:24px;background:#5f5f5f;border-left:1px solid #555555;border-bottom:1px solid #505050"></div>
<div class="a" style="left:423px;top:675px;width:408px;height:24px;background:#5e5e5e;border-left:1px solid #505050;border-bottom:1px solid #505050"></div>
<div class="a" style="left:831px;top:675px;width:188px;height:24px;background:#5e5e5e;border-left:1px solid #505050;border-bottom:1px solid #505050"></div>
<svg class="a" style="left:41px;top:683px" width="5" height="8" viewBox="0 0 5 8"><path d="M0.5 0.5V7.5L4.5 4Z" fill="#cfcfcf"/></svg>
<svg class="a" style="left:53.5px;top:681px" width="16" height="14" viewBox="0 0 16 14" fill="none" stroke="#d9d9d9" stroke-width="1"><path d="M0.9 4.9L8.8 7.3V11.8L0.9 9.5Z"/><path d="M8.8 7.3L13.8 3.3L14.9 7.1L8.8 11.8"/><path d="M0.9 4.9L2.8 1.6Q3.5 0.8 5 0.8H9L13.8 3.3"/><path d="M1.8 5.6L8.6 7.9" stroke-width="0.8"/></svg>
<div class="t" style="left:75px;top:680px;color:#ececec">ModbusDevice</div>
</div>
<svg class="a" style="left:1438px;top:106px" width="9" height="6" viewBox="0 0 9 6"><path d="M0.5 5.5H8.5L4.5 0.8Z" fill="#dedede"/></svg>
<div class="a" style="left:1439px;top:118px;width:7px;height:633px;border-radius:3.5px;background:linear-gradient(90deg,#d4d4d4,#adadad)"></div>
<svg class="a" style="left:1438px;top:782px" width="9" height="6" viewBox="0 0 9 6"><path d="M0.5 0.5H8.5L4.5 5.2Z" fill="#dedede"/></svg>
<svg class="a" style="left:419px;top:797px" width="6" height="9" viewBox="0 0 6 9"><path d="M5.5 0.5V8.5L0.8 4.5Z" fill="#dedede"/></svg>
<div class="a" style="left:432px;top:798px;width:967px;height:7px;border-radius:3.5px;background:linear-gradient(180deg,#d4d4d4,#adadad)"></div>
<svg class="a" style="left:1423px;top:797px" width="6" height="9" viewBox="0 0 6 9"><path d="M0.5 0.5V8.5L5.2 4.5Z" fill="#dedede"/></svg>
<div class="a" style="left:413px;top:810px;width:1039px;height:1px;background:#424242"></div>
<div class="a" style="left:413px;top:811px;width:1038px;height:29px;background:#5a5a5a"></div>
<div class="a" style="left:1250px;top:813px;width:97px;height:24px;border:1px solid #424242;border-radius:2px;background:#575757"></div>
<div class="t" style="left:1250px;top:819px;width:99px;text-align:center;color:#ececec">Cancel</div>
<div class="a" style="left:1351px;top:813px;width:97px;height:24px;border:1px solid #424242;border-radius:2px;background:#575757"></div>
<div class="t" style="left:1351px;top:819px;width:99px;text-align:center;color:#ececec">Save</div>
<div class="a" style="left:416px;top:841px;width:75px;height:25px;border:1px solid #424242;background:#575757"></div>
<div class="t" style="left:425px;top:848px;color:#cfcfcf">Wire Sheet</div>
<div class="a" style="left:492px;top:840px;width:97px;height:28px;border:1px solid #424242;border-bottom:none;background:#5e5e5e"></div>
<div class="t" style="left:502px;top:849px;color:#ececec">Property Sheet</div>
<div class="a" style="left:590px;top:841px;width:71px;height:25px;border:1px solid #424242;background:#575757"></div>
<div class="t" style="left:599px;top:848px;color:#cfcfcf">Slot Sheet</div>
</body></html>
